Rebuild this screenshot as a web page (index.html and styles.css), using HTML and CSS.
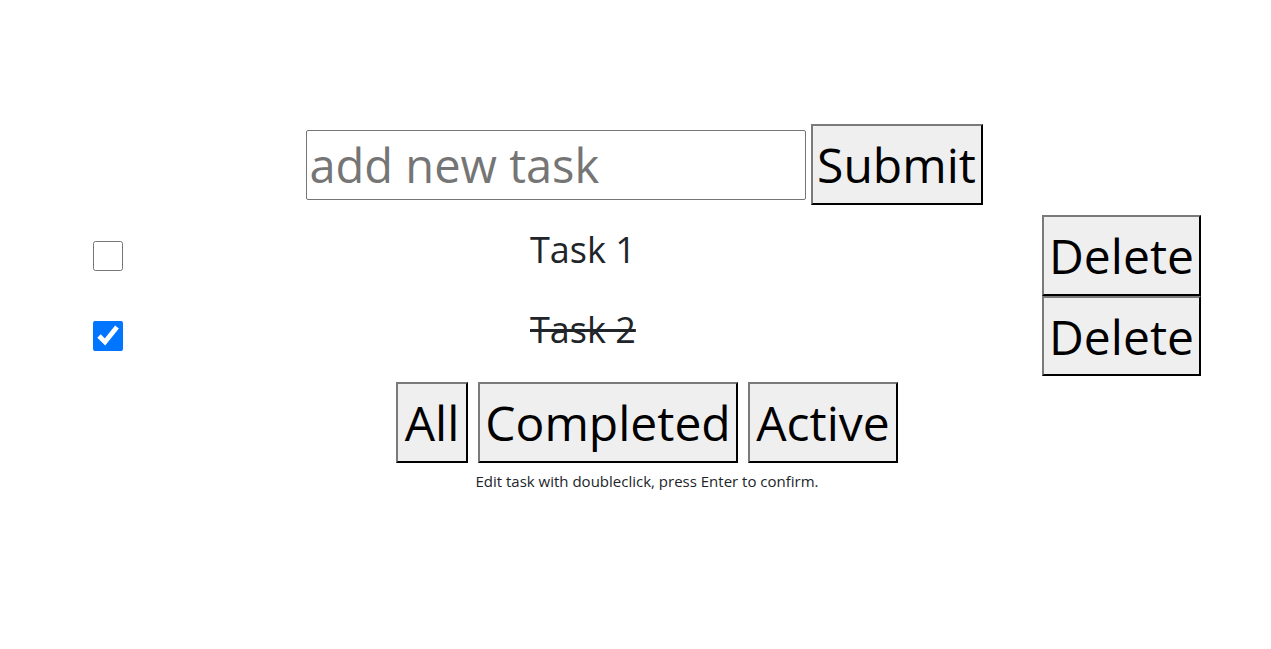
FILE: index.html
```html
<!DOCTYPE html>
<html lang="en">
<head>
<meta charset="utf-8">
<title>Todo</title>
<link rel="stylesheet" href="styles.css">
</head>
<body>
<main class="app">
  <form class="add-form">
    <input class="add-input" type="text" placeholder="add new task">
    <button class="btn btn-submit" type="button">Submit</button>
  </form>
  <ul class="task-list">
    <li class="task">
      <input class="task-check" type="checkbox">
      <span class="task-text">Task 1</span>
      <button class="btn btn-delete" type="button">Delete</button>
    </li>
    <li class="task">
      <input class="task-check" type="checkbox" checked>
      <span class="task-text done">Task 2</span>
      <button class="btn btn-delete" type="button">Delete</button>
    </li>
  </ul>
  <div class="filters">
    <button class="btn btn-all" type="button">All</button>
    <button class="btn btn-completed" type="button">Completed</button>
    <button class="btn btn-active" type="button">Active</button>
  </div>
  <p class="hint">Edit task with doubleclick, press Enter to confirm.</p>
</main>
</body>
</html>
```

FILE: styles.css
```css
html, body {
  margin: 0;
  padding: 0;
  background: #ffffff;
}

body {
  font-family: "Open Sans", "Noto Sans", "Liberation Sans", sans-serif;
  color: #212529;
}

.app {
  width: 1108px;
  margin-left: 93px;
  padding-top: 124px;
}

.add-form {
  display: flex;
  justify-content: center;
  align-items: center;
  gap: 5px;
  height: 81px;
  padding-right: 6px;
}

.add-input {
  box-sizing: border-box;
  width: 500px;
  height: 70px;
  border: 1px solid #767676;
  border-radius: 2px;
  padding: 0 3px;
  font-family: inherit;
  font-size: 47px;
  color: #000;
  outline: none;
}

.add-input::placeholder {
  color: #757575;
}

.btn {
  box-sizing: border-box;
  height: 81px;
  margin: 0;
  padding: 0 4px;
  background: #efefef;
  border: 2px outset #767676;
  border-color: #7a7a7a #3a3a3a #3a3a3a #7a7a7a;
  font-family: inherit;
  font-size: 48px;
  color: #000;
  cursor: pointer;
  white-space: nowrap;
}

.btn-submit { width: 172px; }

.task-list {
  list-style: none;
  margin: 10px 0 0;
  padding: 0;
}

.task {
  display: grid;
  grid-template-columns: 437px 1fr 159px;
  align-items: center;
}

.task + .task .btn-delete {
  height: 80px;
}

.task-check {
  width: 30px;
  height: 30px;
  margin: 0;
}

.task-text {
  font-size: 36px;
  line-height: 50px;
  margin-top: -12px;
}

.task-text.done {
  text-decoration: line-through;
}

.btn-delete { width: 159px; }

.filters {
  display: flex;
  justify-content: center;
  gap: 10px;
  margin-top: 6px;
}

.btn-all { width: 72px; }
.btn-completed { width: 260px; }
.btn-active { width: 150px; }

.hint {
  margin: 9px 0 0;
  text-align: center;
  font-size: 15px;
  line-height: 18px;
}
```
